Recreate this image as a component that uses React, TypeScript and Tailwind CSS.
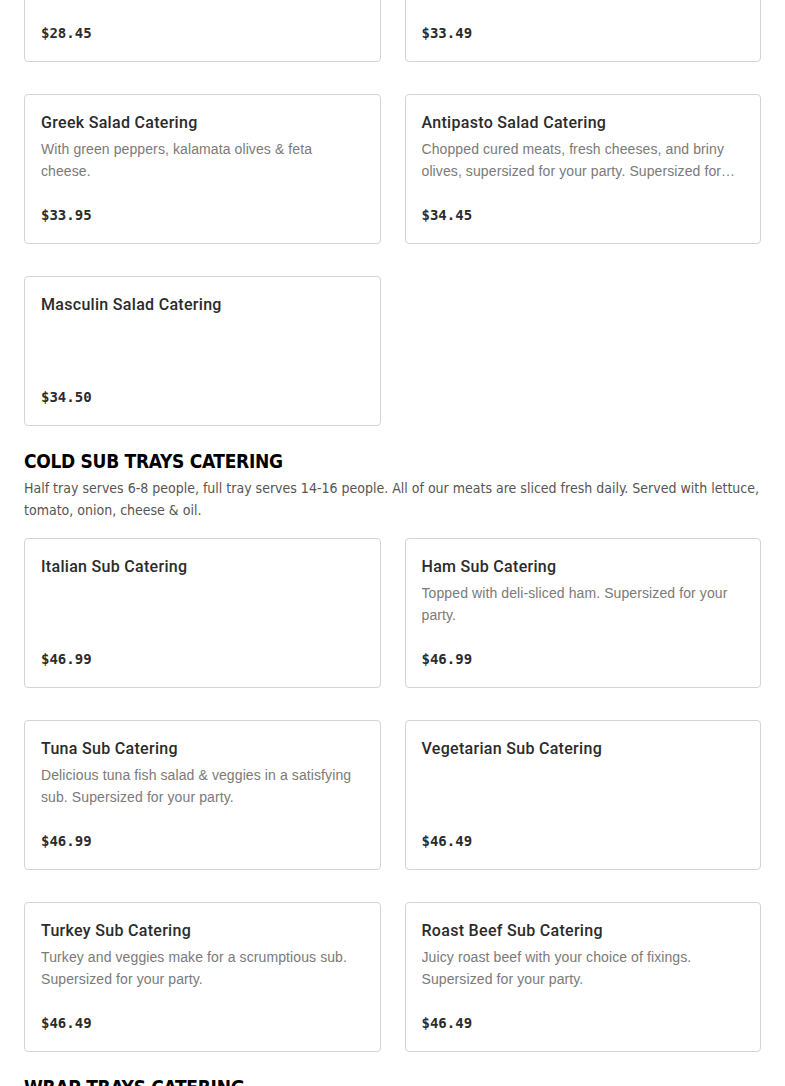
import React from "react";

type Item = { title: string; desc?: string; price: string };

const salads: Item[] = [
  { title: "Garden Salad Catering", desc: "Fresh greens and veggies.", price: "$28.45" },
  { title: "Chef Salad Catering", desc: "Supersized for your party.", price: "$33.49" },
  { title: "Greek Salad Catering", desc: "With green peppers, kalamata olives & feta cheese.", price: "$33.95" },
  {
    title: "Antipasto Salad Catering",
    desc: "Chopped cured meats, fresh cheeses, and briny olives, supersized for your party. Supersized for your party.",
    price: "$34.45",
  },
  { title: "Masculin Salad Catering", price: "$34.50" },
];

const subs: Item[] = [
  { title: "Italian Sub Catering", price: "$46.99" },
  { title: "Ham Sub Catering", desc: "Topped with deli-sliced ham. Supersized for your party.", price: "$46.99" },
  { title: "Tuna Sub Catering", desc: "Delicious tuna fish salad & veggies in a satisfying sub. Supersized for your party.", price: "$46.99" },
  { title: "Vegetarian Sub Catering", price: "$46.49" },
  { title: "Turkey Sub Catering", desc: "Turkey and veggies make for a scrumptious sub. Supersized for your party.", price: "$46.49" },
  { title: "Roast Beef Sub Catering", desc: "Juicy roast beef with your choice of fixings. Supersized for your party.", price: "$46.49" },
];

function Card({ item }: { item: Item }) {
  return (
    <div className="h-[150px] rounded-[4px] border border-[#d4d4d4] bg-white px-4 pt-[16px] pb-[16px] flex flex-col justify-between">
      <div>
        <div className="text-[16px] leading-[24px] font-medium tracking-[0.3px] text-[#2b2b2b] [font-family:Roboto,'Liberation_Sans',sans-serif]">
          {item.title}
        </div>
        {item.desc && (
          <div className="mt-[3px] text-[14px] leading-[22px] tracking-[0.1px] text-[#7a7a7a] line-clamp-2 [font-family:'Liberation_Sans',Arial,sans-serif]">
            {item.desc}
          </div>
        )}
      </div>
      <div className="text-[14px] leading-[24px] font-bold text-[#2b2b2b] [font-family:'DejaVu_Sans_Mono',monospace]">
        {item.price}
      </div>
    </div>
  );
}

function Grid({ items }: { items: Item[] }) {
  return (
    <div className="grid grid-cols-2 gap-x-6 gap-y-8">
      {items.map((it) => (
        <Card key={it.title} item={it} />
      ))}
    </div>
  );
}

function Heading({ children }: { children: React.ReactNode }) {
  return (
    <h2 className="text-[19px] leading-[24px] font-black uppercase text-black tracking-[-0.3px] [font-family:'DejaVu_Sans_Condensed','DejaVu_Sans',sans-serif]">
      {children}
    </h2>
  );
}

export default function App() {
  return (
    <div className="w-[785px] h-[1086px] overflow-hidden bg-white">
      <div className="px-6 -mt-[88px]">
        <Grid items={salads} />
        <div className="mt-[23px]">
          <Heading>Cold Sub Trays Catering</Heading>
          <p className="mt-[4px] text-[14px] leading-[22px] text-[#555555] [font-family:'DejaVu_Sans_Condensed','DejaVu_Sans',sans-serif]">
            Half tray serves 6-8 people, full tray serves 14-16 people. All of our meats are sliced fresh daily. Served with lettuce, tomato, onion, cheese &amp; oil.
          </p>
        </div>
        <div className="mt-[17px]">
          <Grid items={subs} />
        </div>
        <div className="mt-[23px]">
          <Heading>Wrap Trays Catering</Heading>
        </div>
      </div>
    </div>
  );
}
